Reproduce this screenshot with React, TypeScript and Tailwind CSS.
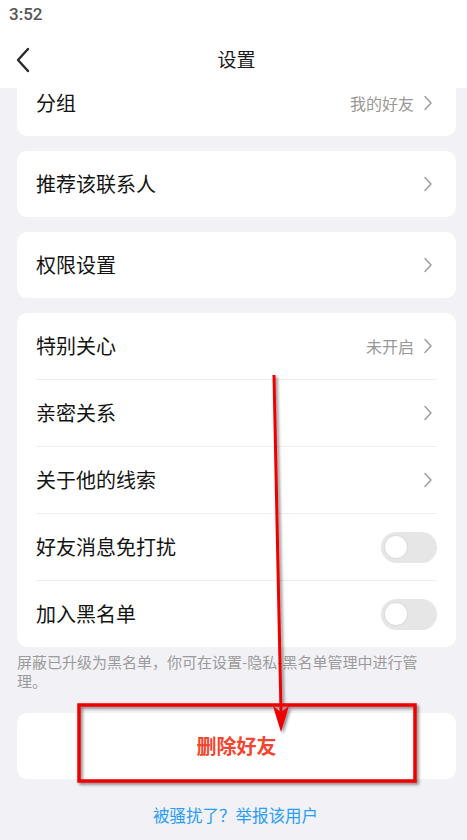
import React from "react";

const font = { fontFamily: '"Noto Sans CJK SC", "Noto Sans", sans-serif' };

function Chevron() {
  return (
    <svg width="10" height="16" viewBox="0 0 10 16" fill="none" className="shrink-0">
      <path d="M2 1.5 L8 8 L2 14.5" stroke="#9a9a9a" strokeWidth="1.4" strokeLinecap="round" strokeLinejoin="round" />
    </svg>
  );
}

function Toggle() {
  return (
    <div className="w-[56px] h-[31px] rounded-full bg-[#e6e6e6] flex items-center px-[4px]">
      <div className="w-[22px] h-[22px] rounded-full bg-white shadow-[0_0_2px_rgba(0,0,0,0.15)]" />
    </div>
  );
}

type RowProps = { label: string; value?: string; toggle?: boolean; divider?: boolean };

function Row({ label, value, toggle, divider }: RowProps) {
  return (
    <div className="flex flex-col">
      {divider && <div className="ml-[19px] mr-[19px] h-px bg-[#eeeeee]" />}
      <div className={`h-[66px] flex items-center pl-[19px] ${toggle ? "pr-[19px]" : "pr-[23px]"}`}>
        <span className="flex-1 text-[20px] text-[#141414]">{label}</span>
        {toggle ? (
          <Toggle />
        ) : (
          <div className="flex items-center gap-[9px]">
            {value && <span className="text-[16px] text-[#999999]">{value}</span>}
            <Chevron />
          </div>
        )}
      </div>
    </div>
  );
}

function Card({ children, className = "" }: { children: React.ReactNode; className?: string }) {
  return <div className={`ml-[17px] mr-[11px] bg-white rounded-[10px] ${className}`}>{children}</div>;
}

export default function App() {
  return (
    <div className="relative w-[467px] h-[840px] overflow-hidden bg-[#f1f1f6]" style={font}>
      {/* status bar */}
      <div className="h-[30px] bg-white flex items-center pl-[9px]">
        <span className="text-[17px] text-[#555555] font-medium" style={{ fontFamily: '"Roboto", "Noto Sans", sans-serif' }}>
          3:52
        </span>
      </div>

      {/* navigation bar */}
      <div className="relative h-[58px] bg-white flex items-center justify-center pl-[6px]">
        <svg width="16" height="26" viewBox="0 0 16 26" fill="none" className="absolute left-[15px] top-[17px]">
          <path d="M13 2 L3 13 L13 24" stroke="#2a2a2a" strokeWidth="2.4" strokeLinecap="round" strokeLinejoin="round" />
        </svg>
        <span className="text-[19px] text-[#1a1a1a]">设置</span>
      </div>

      {/* settings list */}
      <div className="flex flex-col gap-[15px]">
        <Card className="-mt-[18px] rounded-t-none">
          <Row label="分组" value="我的好友" />
        </Card>
        <Card>
          <Row label="推荐该联系人" />
        </Card>
        <Card>
          <Row label="权限设置" />
        </Card>
        <Card>
          <Row label="特别关心" value="未开启" />
          <Row label="亲密关系" divider />
          <Row label="关于他的线索" divider />
          <Row label="好友消息免打扰" toggle divider />
          <Row label="加入黑名单" toggle divider />
        </Card>
      </div>

      <p className="w-[430px] pl-[17px] pr-[0px] pt-[5px] text-[15px] leading-[19px] text-[#9b9b9b]">
        屏蔽已升级为黑名单，你可在设置-隐私-黑名单管理中进行管理。
      </p>

      <Card className="mt-[23px] h-[66px] flex items-center justify-center">
        <span className="text-[20px] font-bold text-[#f2462f]">删除好友</span>
      </Card>

      <div className="mt-[24px] pl-[4px] text-center text-[16.5px] text-[#2a9df4]">被骚扰了？举报该用户</div>

      {/* red annotation overlay */}
      <svg className="absolute inset-0 pointer-events-none" width="467" height="840" viewBox="0 0 467 840">
        <defs>
          <filter id="shade" x="-20%" y="-20%" width="140%" height="140%">
            <feDropShadow dx="2" dy="2" stdDeviation="1.5" floodColor="#000" floodOpacity="0.45" />
          </filter>
        </defs>
        <g filter="url(#shade)">
          <rect x="79" y="705" width="336" height="76" fill="none" stroke="#ee0000" strokeWidth="3.5" />
          <line x1="274" y1="375" x2="281" y2="712" stroke="#ee0000" strokeWidth="3" />
          <path d="M273 706 L281 712 L289 706 L281 732 Z" fill="#ee0000" />
        </g>
      </svg>
    </div>
  );
}
